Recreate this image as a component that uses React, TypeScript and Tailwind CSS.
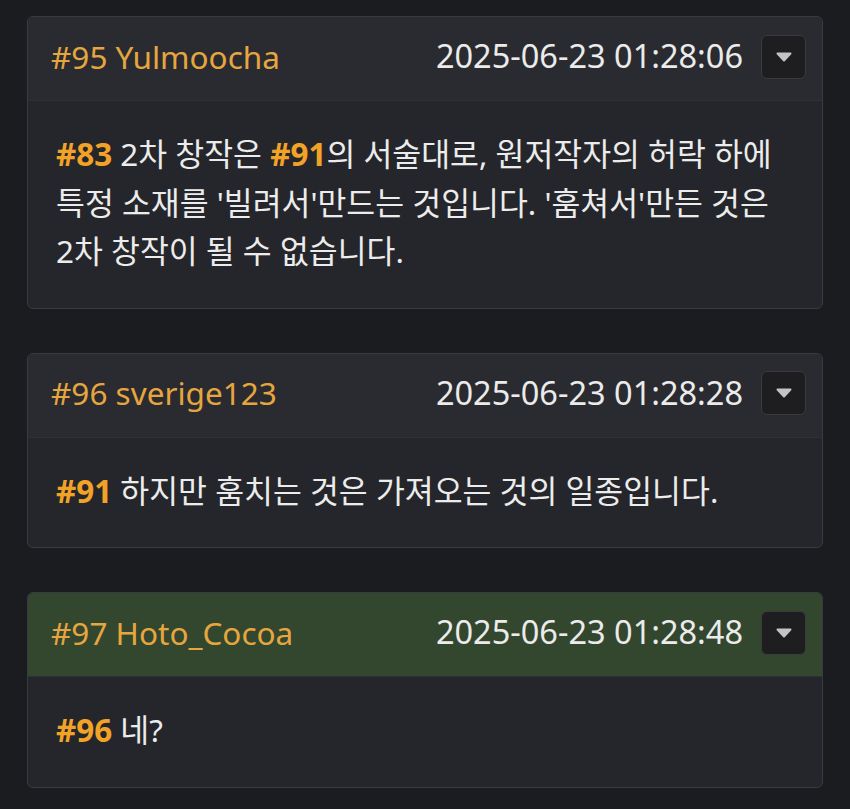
const comments = [
  {
    no: 95,
    author: 'Yulmoocha',
    time: '2025-06-23 01:28:06',
    mine: false,
    lines: [
      [{ ref: '#83' }, ' 2차 창작은 ', { ref: '#91' }, '의 서술대로, 원저작자의 허락 하에'],
      ["특정 소재를 '빌려서'만드는 것입니다. '훔쳐서'만든 것은"],
      ['2차 창작이 될 수 없습니다.'],
    ],
  },
  {
    no: 96,
    author: 'sverige123',
    time: '2025-06-23 01:28:28',
    mine: false,
    lines: [[{ ref: '#91' }, ' 하지만 훔치는 것은 가져오는 것의 일종입니다.']],
  },
  {
    no: 97,
    author: 'Hoto_Cocoa',
    time: '2025-06-23 01:28:48',
    mine: true,
    lines: [[{ ref: '#96' }, ' 네?']],
  },
];

type Part = string | { ref: string };

function Line({ parts }: { parts: Part[] }) {
  return (
    <div className="whitespace-nowrap">
      {parts.map((p, i) =>
        typeof p === 'string' ? (
          <span key={i}>{p}</span>
        ) : (
          <span key={i} className="font-bold text-[#f2a327]">
            {p.ref}
          </span>
        ),
      )}
    </div>
  );
}

export default function App() {
  return (
    <div
      className="flex min-h-[809px] flex-col gap-[44px] bg-[#1b1c1f] px-[27px] pt-4"
      style={{ fontFamily: '"Noto Sans", "Noto Sans CJK KR", sans-serif' }}
    >
      {comments.map((c) => (
        <div key={c.no} className="overflow-hidden rounded-md border border-[#3a3b40] bg-[#25262b]">
          <div
            className={
              'flex h-[84px] items-center justify-between border-b border-[#2f3035] pl-[23px] pr-4 ' +
              (c.mine ? 'bg-[#33472f]' : 'bg-[#2a2b30]')
            }
          >
            <div className="-mt-1 text-[31.5px] text-[#e6a63f]">
              #{c.no} {c.author}
            </div>
            <div className="-mt-1 flex items-center gap-[18px]">
              <span className="text-[32.5px] text-[#ebebeb]">{c.time}</span>
              <button
                type="button"
                className="flex h-[44px] w-[45px] items-center justify-center rounded-md border border-[#3b3b3e] bg-[#1e1e21]"
              >
                <svg width="16" height="10" viewBox="0 0 16 10">
                  <path d="M1.5 1.5 H14.5 L8 8.5 Z" fill="#c4c4c4" stroke="#c4c4c4" strokeLinejoin="round" strokeWidth="2" />
                </svg>
              </button>
            </div>
          </div>
          <div className="px-[28px] pb-[32px] pt-[29px] text-[31.4px] leading-[48.5px] text-[#ececec]">
            {c.lines.map((l, i) => (
              <Line key={i} parts={l as Part[]} />
            ))}
          </div>
        </div>
      ))}
    </div>
  );
}
